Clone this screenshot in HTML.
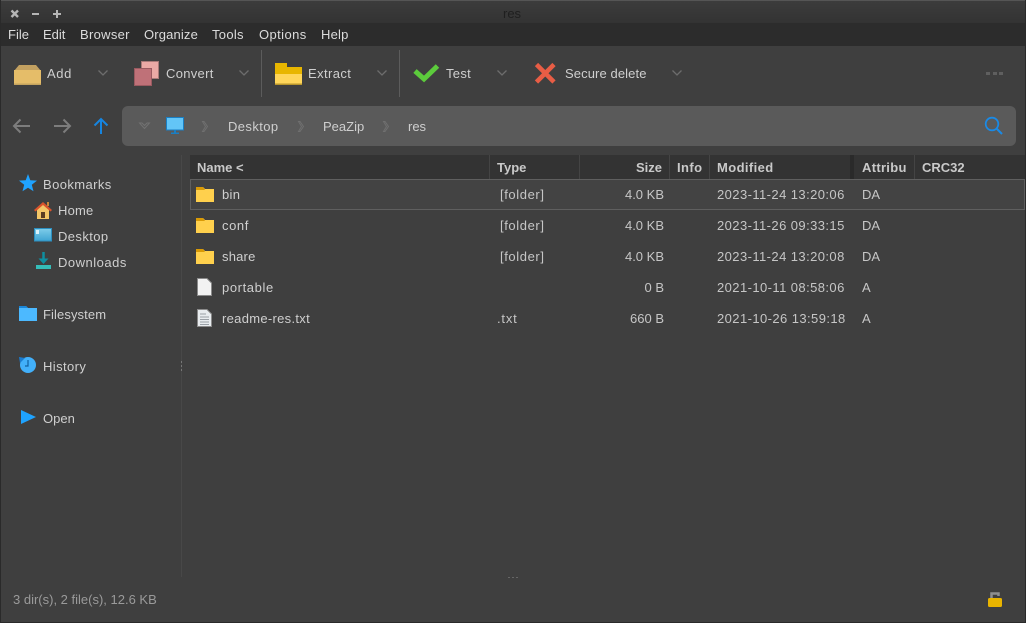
<!DOCTYPE html>
<html><head><meta charset="utf-8">
<style>
html,body{margin:0;padding:0;background:#3f3f3f;}
#w{position:relative;width:1026px;height:623px;overflow:hidden;background:#3f3f3f;font-family:"Liberation Sans",sans-serif;font-size:13px;color:#cfcfcf;}
.t{position:absolute;white-space:nowrap;line-height:16px;height:16px;}
.r{text-align:right;}
.b{font-weight:bold;color:#c9c9c9;}
.d{color:#c6c6c6;}
.m{color:#dcdcdc;top:27px;}
.dt{letter-spacing:.42px;}
.f{letter-spacing:.6px;}
svg{position:absolute;overflow:visible;}
.box{position:absolute;}
</style></head><body><div id="w">
<!-- title bar -->
<div class="box" style="left:0;top:0;width:1026px;height:23px;background:linear-gradient(#3c3c3c,#333);border-top:1px solid #555;box-sizing:border-box;"></div>
<div class="t" style="left:503px;top:6px;color:#1f1f1f;font-size:13px;">res</div>
<svg style="left:10px;top:9px" width="10" height="10"><path d="M1.5 1.5L8 8M8 1.5L1.5 8" stroke="#b5b5b5" stroke-width="2.4"/></svg>
<div class="box" style="left:32px;top:13px;width:7px;height:2px;background:#b5b5b5"></div>
<div class="box" style="left:53px;top:13px;width:8px;height:2px;background:#b5b5b5"></div>
<div class="box" style="left:56px;top:10px;width:2px;height:8px;background:#b5b5b5"></div>
<!-- menu -->
<div class="box" style="left:0;top:23px;width:1026px;height:23px;background:#2c2c2c;"></div>
<div class="t m" style="left:8px">File</div>
<div class="t m" style="left:43px">Edit</div>
<div class="t m" style="left:80px;letter-spacing:.3px">Browser</div>
<div class="t m" style="left:144px;letter-spacing:.15px">Organize</div>
<div class="t m" style="left:212px;letter-spacing:.3px">Tools</div>
<div class="t m" style="left:259px;letter-spacing:.4px">Options</div>
<div class="t m" style="left:321px;letter-spacing:.2px">Help</div>
<!-- toolbar -->
<svg style="left:14px;top:65px" width="28" height="20"><path d="M0 6L5 0H22L27 6Z" fill="#c2a060"/><rect x="0" y="5" width="27" height="15" fill="#e5bd69"/><rect x="0" y="18.500" width="27" height="1.500" fill="#c4a35e"/></svg>
<div class="t" style="left:47px;top:66px;letter-spacing:.6px">Add</div>
<svg style="left:98px;top:70px" width="10" height="6"><path d="M.5.5L5 5 9.500.5" fill="none" stroke="#6d6d6d" stroke-width="1.300"/></svg>
<svg style="left:134px;top:61px" width="26" height="25"><rect x="7.500" y=".5" width="17" height="17" fill="#eaa9a5" stroke="#a87a78"/><rect x=".5" y="7.500" width="17" height="17" fill="#bf7178" stroke="#9a5a60"/></svg>
<div class="t" style="left:166px;top:66px;letter-spacing:.3px">Convert</div>
<svg style="left:239px;top:70px" width="10" height="6"><path d="M.5.5L5 5 9.500.5" fill="none" stroke="#6d6d6d" stroke-width="1.300"/></svg>
<div class="box" style="left:261px;top:50px;width:1px;height:47px;background:#5c5c5c"></div>
<svg style="left:275px;top:63px" width="27" height="22"><path d="M0 0H12V4H27V12H0Z" fill="#e8b600"/><rect x="0" y="11" width="27" height="10" fill="#ffd65a"/><rect x="0" y="20.500" width="27" height="1.500" fill="#b8952c"/></svg>
<div class="t" style="left:308px;top:66px;letter-spacing:.4px">Extract</div>
<svg style="left:377px;top:70px" width="10" height="6"><path d="M.5.5L5 5 9.500.5" fill="none" stroke="#6d6d6d" stroke-width="1.300"/></svg>
<div class="box" style="left:399px;top:50px;width:1px;height:47px;background:#5c5c5c"></div>
<svg style="left:413px;top:63px" width="27" height="20"><path d="M2 8L11 16 24.500 3" fill="none" stroke="#5ccb3c" stroke-width="5"/></svg>
<div class="t" style="left:446px;top:66px;letter-spacing:.3px">Test</div>
<svg style="left:497px;top:70px" width="10" height="6"><path d="M.5.5L5 5 9.500.5" fill="none" stroke="#6d6d6d" stroke-width="1.300"/></svg>
<svg style="left:534px;top:62px" width="23" height="23"><path d="M2.500 2.500L20 20M20 2.500L2.500 20" stroke="#e85d45" stroke-width="4.600"/></svg>
<div class="t" style="left:565px;top:66px;letter-spacing:.1px">Secure delete</div>
<svg style="left:672px;top:70px" width="10" height="6"><path d="M.5.5L5 5 9.500.5" fill="none" stroke="#6d6d6d" stroke-width="1.300"/></svg>
<div class="box" style="left:986px;top:72px;width:4px;height:3px;background:#5f5f5f"></div>
<div class="box" style="left:993px;top:72px;width:4px;height:3px;background:#5f5f5f"></div>
<div class="box" style="left:999px;top:72px;width:4px;height:3px;background:#5f5f5f"></div>
<!-- nav -->
<svg style="left:12px;top:117px" width="20" height="18"><path d="M18 9H2M8.500 2.500L2 9 8.500 15.500" fill="none" stroke="#7d7d7d" stroke-width="2"/></svg>
<svg style="left:52px;top:117px" width="20" height="18"><path d="M2 9H18M11.500 2.500L18 9 11.500 15.500" fill="none" stroke="#7d7d7d" stroke-width="2"/></svg>
<svg style="left:93px;top:117px" width="16" height="18"><path d="M8 17V2M1.500 8.500L8 2 14.500 8.500" fill="none" stroke="#1685e0" stroke-width="2"/></svg>
<!-- path bar -->
<div class="box" style="left:122px;top:106px;width:894px;height:40px;background:#5a5a5a;border-radius:6px;"></div>
<svg style="left:139px;top:122px" width="11" height="8"><path d="M.5 1H3L5.500 3.500 8 1H10.500L5.500 6.500Z" fill="none" stroke="#727272" stroke-width="1"/></svg>
<svg style="left:166px;top:117px" width="19" height="18"><rect x=".5" y=".5" width="17" height="12.500" fill="#63c5f7" stroke="#1a7fc4"/><rect x="8" y="13" width="2" height="3" fill="#1a7fc4"/><rect x="5" y="15.500" width="8" height="1.500" fill="#1a7fc4"/></svg>
<svg style="left:202px;top:121px" width="8" height="12"><path d="M.5.5H2L5.500 5.500 2 10.500H.5L3.500 5.500Z" fill="none" stroke="#707070" stroke-width="1"/></svg>
<div class="t" style="left:228px;top:119px;letter-spacing:.4px">Desktop</div>
<svg style="left:298px;top:121px" width="8" height="12"><path d="M.5.5H2L5.500 5.500 2 10.500H.5L3.500 5.500Z" fill="none" stroke="#707070" stroke-width="1"/></svg>
<div class="t" style="left:323px;top:119px">PeaZip</div>
<svg style="left:383px;top:121px" width="8" height="12"><path d="M.5.5H2L5.500 5.500 2 10.500H.5L3.500 5.500Z" fill="none" stroke="#707070" stroke-width="1"/></svg>
<div class="t" style="left:408px;top:119px">res</div>
<svg style="left:984px;top:116px" width="20" height="20"><circle cx="8" cy="8" r="6.300" fill="none" stroke="#1a8ae6" stroke-width="1.800"/><path d="M12.500 12.500L18 18" stroke="#1a8ae6" stroke-width="2"/></svg>
<!-- sidebar -->
<svg style="left:19px;top:174px" width="18" height="18"><path d="M9 0L11.300 6.200 18 6.600 12.800 10.800 14.500 17.300 9 13.700 3.500 17.300 5.200 10.800 0 6.600 6.700 6.200Z" fill="#1fa3ff"/></svg>
<div class="t" style="left:43px;top:177px;letter-spacing:.4px">Bookmarks</div>
<svg style="left:34px;top:201px" width="18" height="18"><path d="M3 8L9 3 15 8V18H3Z" fill="#f3c667"/><rect x="13" y="1" width="2" height="4" fill="#c9873a"/><path d="M0 9L9 1 18 9 16.500 10.500 9 4 1.500 10.500Z" fill="#d9532c"/><rect x="7" y="11" width="4" height="6" fill="#5a3d22"/></svg>
<div class="t" style="left:58px;top:203px;letter-spacing:.2px">Home</div>
<svg style="left:34px;top:228px" width="18" height="14"><defs><linearGradient id="g" x1="0" y1="0" x2="0" y2="1"><stop offset="0" stop-color="#7fcdea"/><stop offset="1" stop-color="#3fa4d2"/></linearGradient></defs><rect x=".5" y=".5" width="17" height="12.500" fill="url(#g)" stroke="#2c8fc0"/><rect x="2" y="2" width="3" height="4" fill="#d8f1fb"/></svg>
<div class="t" style="left:58px;top:229px;letter-spacing:.4px">Desktop</div>
<svg style="left:35px;top:252px" width="17" height="18"><path d="M8.500 0V9" stroke="#0f8fa0" stroke-width="2.500"/><path d="M3.500 6.500L8.500 12 13.500 6.500Z" fill="#0f8fa0"/><rect x="1" y="13" width="15" height="4" fill="#35bdb8"/></svg>
<div class="t" style="left:58px;top:255px;letter-spacing:.5px">Downloads</div>
<svg style="left:19px;top:306px" width="18" height="15"><path d="M0 0H7L9 2H18V15H0Z" fill="#4cb9ff"/><path d="M0 0H7L9 2H0Z" fill="#1a86d8"/></svg>
<div class="t" style="left:43px;top:307px;letter-spacing:.1px">Filesystem</div>
<svg style="left:19px;top:356px" width="18" height="18"><circle cx="9" cy="9" r="8" fill="#42b0fa"/><path d="M0 1L6 2 1 7Z" fill="#1a7cd0"/><path d="M9 4V10H6" fill="none" stroke="#12609f" stroke-width="1.200"/></svg>
<div class="t" style="left:43px;top:359px;letter-spacing:.4px">History</div>
<svg style="left:21px;top:410px" width="15" height="15"><path d="M0 0L15 7 0 14Z" fill="#1fa3ff"/></svg>
<div class="t" style="left:43px;top:411px">Open</div>
<div class="box" style="left:181px;top:155px;width:1px;height:422px;background:#484848"></div>
<div class="box" style="left:181px;top:361px;width:1px;height:12px;background:repeating-linear-gradient(#777 0 2px,transparent 2px 4px)"></div>
<!-- header -->
<div class="box" style="left:190px;top:155px;width:836px;height:24px;background:#333;"></div>
<div class="box" style="left:489px;top:155px;width:1px;height:24px;background:#444"></div>
<div class="box" style="left:579px;top:155px;width:1px;height:24px;background:#444"></div>
<div class="box" style="left:669px;top:155px;width:1px;height:24px;background:#444"></div>
<div class="box" style="left:709px;top:155px;width:1px;height:24px;background:#444"></div>
<div class="box" style="left:850px;top:155px;width:4px;height:24px;background:#2a2a2a"></div>
<div class="box" style="left:914px;top:155px;width:1px;height:24px;background:#444"></div>
<div class="t b" style="left:197px;top:160px">Name &lt;</div>
<div class="t b" style="left:497px;top:160px">Type</div>
<div class="t b r" style="left:602px;top:160px;width:60px">Size</div>
<div class="t b" style="left:677px;top:160px;letter-spacing:.4px">Info</div>
<div class="t b" style="left:717px;top:160px;letter-spacing:.4px">Modified</div>
<div class="t b" style="left:862px;top:160px;width:46px;overflow:hidden;letter-spacing:.3px">Attribu</div>
<div class="t b" style="left:922px;top:160px">CRC32</div>
<!-- selection -->
<div class="box" style="left:190px;top:179px;width:835px;height:31px;border:1px solid #5f5f5f;box-sizing:border-box;background:#434343"></div>
<!-- rows -->
<svg style="left:196px;top:187px" width="18" height="15"><path d="M0 0H7L9 2H18V15H0Z" fill="#ffd04d"/><path d="M0 0H7L9 3H0Z" fill="#d99a06"/></svg>
<div class="t" style="left:222px;top:187px;letter-spacing:.3px">bin</div><div class="t d f" style="left:500px;top:187px">[folder]</div><div class="t d r" style="left:604px;top:187px;width:60px">4.0 KB</div><div class="t d dt" style="left:717px;top:187px">2023-11-24 13:20:06</div><div class="t d" style="left:862px;top:187px">DA</div>
<svg style="left:196px;top:218px" width="18" height="15"><path d="M0 0H7L9 2H18V15H0Z" fill="#ffd04d"/><path d="M0 0H7L9 3H0Z" fill="#d99a06"/></svg>
<div class="t f" style="left:222px;top:218px">conf</div><div class="t d f" style="left:500px;top:218px">[folder]</div><div class="t d r" style="left:604px;top:218px;width:60px">4.0 KB</div><div class="t d dt" style="left:717px;top:218px">2023-11-26 09:33:15</div><div class="t d" style="left:862px;top:218px">DA</div>
<svg style="left:196px;top:249px" width="18" height="15"><path d="M0 0H7L9 2H18V15H0Z" fill="#ffd04d"/><path d="M0 0H7L9 3H0Z" fill="#d99a06"/></svg>
<div class="t" style="left:222px;top:249px;letter-spacing:.2px">share</div><div class="t d f" style="left:500px;top:249px">[folder]</div><div class="t d r" style="left:604px;top:249px;width:60px">4.0 KB</div><div class="t d dt" style="left:717px;top:249px">2023-11-24 13:20:08</div><div class="t d" style="left:862px;top:249px">DA</div>
<svg style="left:197px;top:278px" width="15" height="18"><path d="M.5.5H10L14.500 5V17.500H.5Z" fill="#f2f2f2" stroke="#8a8a8a"/></svg>
<div class="t f" style="left:222px;top:280px">portable</div><div class="t d r" style="left:604px;top:280px;width:60px">0 B</div><div class="t d dt" style="left:717px;top:280px">2021-10-11 08:58:06</div><div class="t d" style="left:862px;top:280px">A</div>
<svg style="left:197px;top:309px" width="15" height="18"><path d="M.5.5H10L14.500 5V17.500H.5Z" fill="#e8ecef" stroke="#8a8a8a"/><path d="M3 5H9M3 8H12M3 10.500H12M3 13H12M3 15.500H12" stroke="#9aa0a6" stroke-width="1"/></svg>
<div class="t" style="left:222px;top:311px;letter-spacing:.3px">readme-res.txt</div><div class="t d" style="left:497px;top:311px;letter-spacing:.8px">.txt</div><div class="t d r" style="left:604px;top:311px;width:60px">660 B</div><div class="t d dt" style="left:717px;top:311px">2021-10-26 13:59:18</div><div class="t d" style="left:862px;top:311px">A</div>
<!-- status -->
<div class="box" style="left:508px;top:577px;width:12px;height:1px;background:repeating-linear-gradient(90deg,#666 0 2px,transparent 2px 4px)"></div>
<div class="t" style="left:13px;top:592px;color:#9a9a9a">3 dir(s), 2 file(s), 12.6 KB</div>
<svg style="left:988px;top:591px" width="15" height="17"><path d="M3.500 8V2.500H10.500V5" fill="none" stroke="#8f8f8f" stroke-width="2.500"/><rect x="0" y="7" width="14" height="9" rx="1.500" fill="#e9b400"/></svg>
<!-- window edges -->
<div class="box" style="left:0;top:0;width:1px;height:623px;background:#2a2a2a"></div>
<div class="box" style="right:0;top:0;width:1px;height:623px;background:#2a2a2a"></div>
<div class="box" style="left:0;bottom:0;width:1026px;height:1px;background:#2a2a2a"></div>
</div></body></html>
